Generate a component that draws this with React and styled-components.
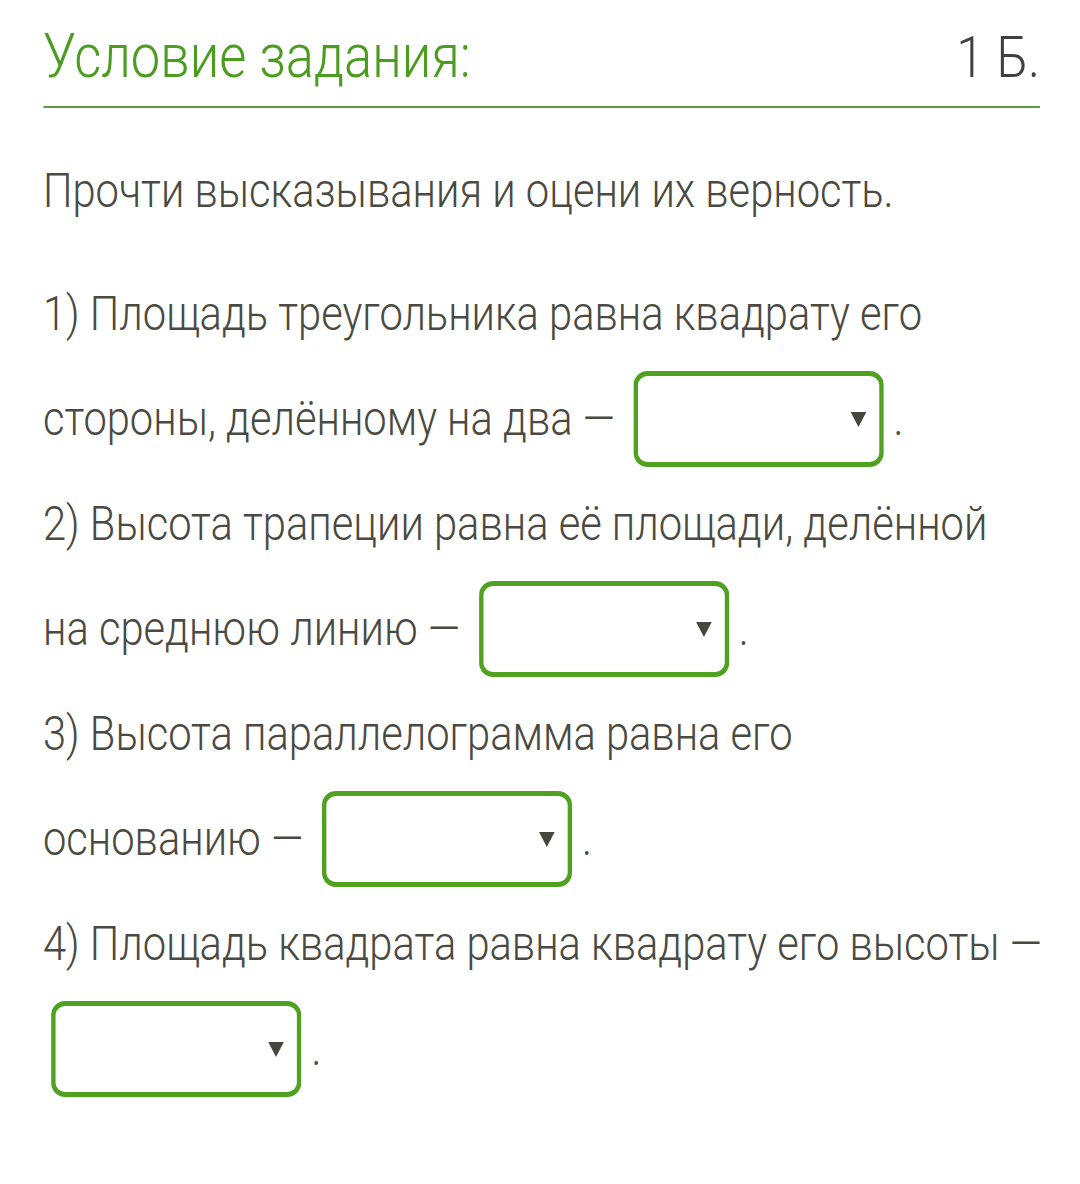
import React from "react";
import styled, { createGlobalStyle } from "styled-components";

const S = 0.868;

const GlobalStyle = createGlobalStyle`
  html, body {
    margin: 0;
    padding: 0;
    background: #ffffff;
  }
  body {
    font-family: "Roboto Light", Roboto, "Noto Sans", "DejaVu Sans", sans-serif;
    font-weight: 300;
    color: #4a4a42;
  }
`;

const Viewport = styled.div`
  width: 1080px;
  overflow: hidden;
`;

const Sheet = styled.div`
  width: ${1080 / S}px;
  box-sizing: border-box;
  padding: 0 ${40 / S}px 0 ${43 / S}px;
  transform: scaleX(${S});
  transform-origin: 0 0;
`;

const Header = styled.header`
  display: flex;
  justify-content: space-between;
  align-items: baseline;
  padding: 21px 0 13px;
  border-bottom: 2px solid #5c9c3e;
`;

const Title = styled.h1`
  margin: 0;
  font-size: 60.5px;
  line-height: 72px;
  font-weight: 300;
  color: #4b9c1f;
`;

const Points = styled.span`
  font-size: 58px;
  line-height: 72px;
  font-weight: 300;
  color: #404040;
`;

const Intro = styled.p`
  margin: 30px 0 0;
  font-size: 48px;
  line-height: 105px;
`;

const Statements = styled.div`
  margin: 18px ${-6 / S}px 0 0;
  font-size: 48px;
  line-height: 105px;
`;

const Statement = styled.p`
  margin: 0;
`;

const Select = styled.span`
  display: inline-block;
  box-sizing: border-box;
  width: ${250 / S}px;
  height: 96px;
  margin-left: ${8.5 / S}px;
  vertical-align: -32px;
  border-style: solid;
  border-color: #4fa220;
  border-width: 5px ${5 / S}px;
  border-radius: ${14 / S}px / 14px;
  background: #ffffff;
  position: relative;

  &::after {
    content: "";
    position: absolute;
    right: ${13 / S}px;
    top: 36px;
    width: 0;
    height: 0;
    border-left: ${8 / S}px solid transparent;
    border-right: ${8 / S}px solid transparent;
    border-top: 15px solid #45463e;
  }
`;

const Dot = styled.span`
  margin-left: ${10 / S}px;
`;

const Blank = () => (
  <>
    <Select aria-label="выбор" />
    <Dot>.</Dot>
  </>
);

export default function App() {
  return (
    <>
      <GlobalStyle />
      <Viewport>
        <Sheet>
          <Header>
            <Title>Условие задания:</Title>
            <Points>1 Б.</Points>
          </Header>
          <Intro>Прочти высказывания и оцени их верность.</Intro>
          <Statements>
            <Statement>
              1) Площадь треугольника равна квадрату его стороны, делённому на
              два{"\u00a0"}— <Blank />
            </Statement>
            <Statement>
              2) Высота трапеции равна её площади, делённой
              <br />
              на среднюю линию{"\u00a0"}— <Blank />
            </Statement>
            <Statement>
              3) Высота параллелограмма равна его основанию{"\u00a0"}— <Blank />
            </Statement>
            <Statement>
              4) Площадь квадрата равна квадрату его высоты{"\u00a0"}— <Blank />
            </Statement>
          </Statements>
        </Sheet>
      </Viewport>
    </>
  );
}
